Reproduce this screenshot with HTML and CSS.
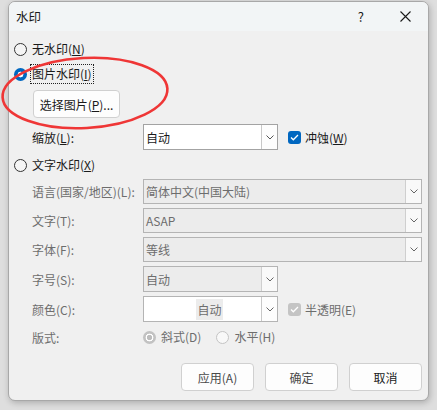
FILE: index.html
```html
<!DOCTYPE html>
<html lang="zh-CN">
<head>
<meta charset="utf-8">
<title>水印</title>
<link rel="stylesheet" href="styles.css">
</head>
<body>
<div class="window">
  <div class="titlebar">
    <span class="title">水印</span>
    <span class="help">?</span>
    <svg class="close" width="11" height="11" viewBox="0 0 11 11"><path d="M0.5 0.5L10.5 10.5M10.5 0.5L0.5 10.5" stroke="#1a1a1a" stroke-width="1.1" fill="none"/></svg>
  </div>
  <div class="content">
    <div class="radio-row m8"><span class="radio"></span><span class="rtext">无水印(<u>N</u>)</span></div>
    <div class="radio-row m5"><span class="radio on"></span><span class="rtext focus">图片水印(<u>I</u>)</span></div>
    <div class="pick-row m6"><button class="btn pick">选择图片(<u>P</u>)...</button></div>
    <div class="field-row m6 tall">
      <span class="label">缩放(<u>L</u>):</span>
      <div class="select narrow"><span class="val">自动</span><span class="arrow"><svg width="8" height="5" viewBox="0 0 8 5"><path d="M0.5 0.5L4 4L7.5 0.5" stroke="#555" fill="none"/></svg></span></div>
      <span class="check on"><svg width="9" height="7" viewBox="0 0 9 7"><path d="M1 3.5L3.3 5.8L8 1" stroke="#fff" stroke-width="1.3" fill="none"/></svg></span>
      <span class="ctext">冲蚀(<u>W</u>)</span>
    </div>
    <div class="radio-row m5"><span class="radio"></span><span class="rtext">文字水印(<u>X</u>)</span></div>
    <div class="field-row m4 dis">
      <span class="label">语言(国家/地区)(L):</span>
      <div class="select wide disabled"><span class="val">简体中文(中国大陆)</span><span class="arrow"><svg width="8" height="5" viewBox="0 0 8 5"><path d="M0.5 0.5L4 4L7.5 0.5" stroke="#666" fill="none"/></svg></span></div>
    </div>
    <div class="field-row m4 dis">
      <span class="label">文字(T):</span>
      <div class="select wide disabled"><span class="val">ASAP</span><span class="arrow"><svg width="8" height="5" viewBox="0 0 8 5"><path d="M0.5 0.5L4 4L7.5 0.5" stroke="#666" fill="none"/></svg></span></div>
    </div>
    <div class="field-row m4 dis">
      <span class="label">字体(F):</span>
      <div class="select wide disabled"><span class="val">等线</span><span class="arrow"><svg width="8" height="5" viewBox="0 0 8 5"><path d="M0.5 0.5L4 4L7.5 0.5" stroke="#666" fill="none"/></svg></span></div>
    </div>
    <div class="field-row m4 tall dis">
      <span class="label">字号(S):</span>
      <div class="select narrow disabled"><span class="val">自动</span><span class="arrow"><svg width="8" height="5" viewBox="0 0 8 5"><path d="M0.5 0.5L4 4L7.5 0.5" stroke="#666" fill="none"/></svg></span></div>
    </div>
    <div class="field-row m4 tall dis">
      <span class="label">颜色(C):</span>
      <div class="select narrow color"><span class="val center"><span class="hl">自动</span></span><span class="arrow"><svg width="8" height="5" viewBox="0 0 8 5"><path d="M0.5 0.5L4 4L7.5 0.5" stroke="#666" fill="none"/></svg></span></div>
      <span class="check disabled"><svg width="9" height="7" viewBox="0 0 9 7"><path d="M1 3.5L3.3 5.8L8 1" stroke="#fff" stroke-width="1.3" fill="none"/></svg></span>
      <span class="ctext">半透明(E)</span>
    </div>
    <div class="field-row m5 short dis">
      <span class="label">版式:</span>
      <span class="radio dis-on"></span><span class="rtext">斜式(D)</span>
      <span class="radio dis-off second"></span><span class="rtext">水平(H)</span>
    </div>
    <div class="buttons">
      <button class="btn foot grey">应用(A)</button>
      <button class="btn foot grey">确定</button>
      <button class="btn foot">取消</button>
    </div>
  </div>
</div>
<svg class="annot" width="437" height="410" viewBox="0 0 437 410"><ellipse cx="85" cy="93" rx="82.5" ry="35" transform="rotate(-3 85 93)" fill="none" stroke="#ef3636" stroke-width="2.6"/></svg>
</body>
</html>
```

FILE: styles.css
```css
* { box-sizing: border-box; }
html, body { margin: 0; padding: 0; }
body {
  width: 437px;
  height: 410px;
  background: #dedede;
  font-family: "Noto Sans CJK SC", "Noto Sans", sans-serif;
  font-size: 12px;
  color: #1a1a1a;
  overflow: hidden;
  padding-top: 1px;
}
u { text-decoration: underline; text-underline-offset: 1px; }

.window {
  margin-left: 8px;
  width: 421px;
  height: 400px;
  background: #f0f0f0;
  border: 1px solid #a8a8a8;
  border-radius: 7px;
  box-shadow: 1px 2px 6px rgba(0,0,0,0.22);
  overflow: hidden;
}

.titlebar {
  height: 29px;
  background: #f2f5f6;
  display: flex;
  align-items: center;
  padding: 0 17px 0 7px;
}
.title { flex: 1; font-size: 12.5px; color: #1a1a1a; }
.help { font-size: 13px; margin-right: 36px; color: #1a1a1a; }
.close { display: block; }

.content { padding: 0 0 0 5px; }
.m4 { margin-top: 4px; }
.m5 { margin-top: 5px; }
.m6 { margin-top: 6px; }
.m8 { margin-top: 8px; }

.radio-row { height: 20px; display: flex; align-items: center; }
.radio {
  width: 13px; height: 13px; border-radius: 50%;
  border: 1px solid #333;
  background: #f5f5f5;
  flex: none;
}
.radio.on {
  border: none;
  background: radial-gradient(circle, #fff 0 2.6px, #0067c0 3.2px);
}
.radio.dis-on {
  border: none;
  background: radial-gradient(circle, #bdbdbd 0 2.4px, #fff 3px 3.6px, #c2c2c2 4.2px);
}
.radio.dis-off { border-color: #c4c4c4; background: #f8f8f8; }
.radio.second { margin-left: 14px; }
.rtext { margin-left: 4px; line-height: 18px; padding: 0 1px; }
.focus { outline: 1px dotted #222; outline-offset: 0; }

.pick-row { padding-left: 19px; }
.btn {
  font-family: inherit;
  font-size: 12px;
  color: #1a1a1a;
  background: #fdfdfd;
  border: 1px solid #d0d0d0;
  border-radius: 4px;
  height: 28px;
  padding: 0;
  display: block;
}
.pick { width: 87px; }

.field-row {
  height: 25px;
  display: flex;
  align-items: center;
  padding-left: 18px;
}
.field-row.tall { height: 26px; }
.field-row.short { height: 20px; }
.label { width: 111px; flex: none; }
.dis .label, .dis .rtext, .dis .ctext { color: #6d6d6d; }

.select {
  height: 100%;
  border: 1px solid #a3a3a3;
  background: #fff;
  display: flex;
  flex: none;
}
.select.narrow { width: 135px; }
.select.wide { width: 279px; }
.select .val { flex: 1; padding-left: 2px; display: flex; align-items: center; color: #1a1a1a; }
.select .val.center { justify-content: center; padding-left: 14px; }
.select .arrow {
  width: 16px;
  border-left: 1px solid #c8c8c8;
  background: #fdfdfd;
  display: flex; align-items: center; justify-content: center;
}
.select.disabled { border-color: #b4b4b4; background: #ececec; }
.select.disabled .val { color: #6d6d6d; }
.select.disabled .arrow { background: #f9f9f9; border-left-color: #cfcfcf; }
.select.color { border-color: #b4b4b4; }
.hl { background: #ececec; color: #6d6d6d; padding: 2px 1px; }

.check {
  width: 13px; height: 13px;
  border-radius: 3px;
  margin-left: 10px;
  display: flex; align-items: center; justify-content: center;
  flex: none;
}
.check.on { background: #0067c0; }
.check.disabled { background: #c4c4c4; }
.ctext { margin-left: 4px; }

.buttons {
  margin-top: 16px;
  display: flex;
  justify-content: flex-end;
  gap: 11px;
  padding-right: 6px;
}
.btn.foot { width: 73px; }
.btn.grey { color: #4a4a4a; }

.annot { position: absolute; left: 0; top: 0; pointer-events: none; }
```
